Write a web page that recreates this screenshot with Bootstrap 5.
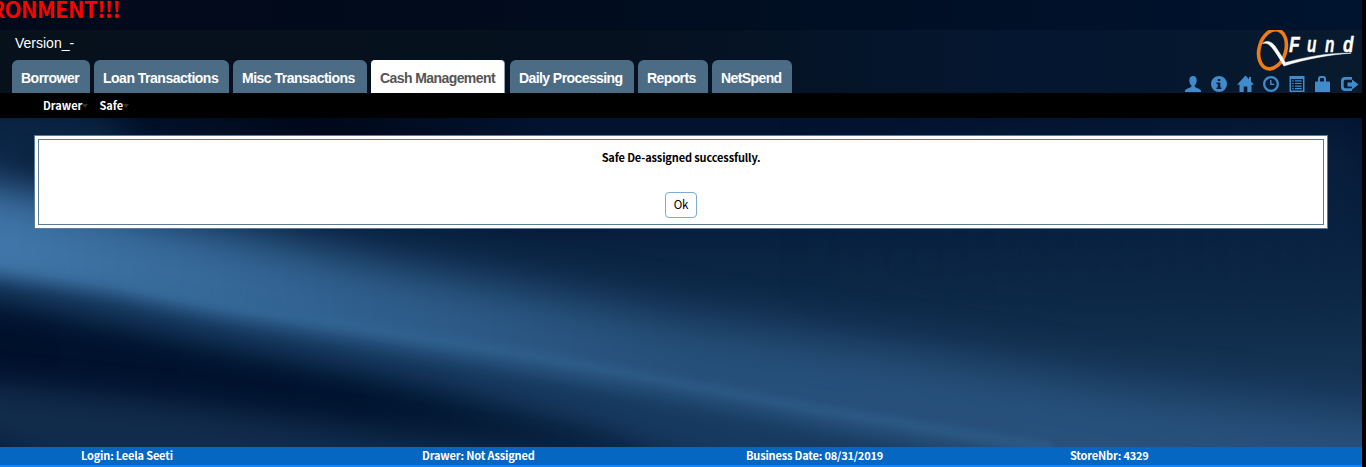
<!DOCTYPE html>
<html lang="en">
<head>
<meta charset="utf-8">
<meta name="viewport" content="width=device-width, initial-scale=1">
<title>QFund</title>
<link rel="stylesheet" href="https://cdn.jsdelivr.net/npm/bootstrap@5.3.0/dist/css/bootstrap.min.css">
<style>
body{background:#000;height:467px;font-family:"Noto Sans CJK SC","Noto Sans",sans-serif;font-size:11px;color:#000}
.page{width:1362px;height:467px}
.env{height:30px;background:linear-gradient(90deg,#02091a,#010b1c 35%,#00142f);color:#f00;font-size:22px;line-height:17px;font-weight:700;letter-spacing:-.55px}
.env span{margin-left:-132px;width:252px;text-align:right;white-space:nowrap}
.head{height:63px;background:linear-gradient(90deg,#06111c,#06111f 45%,#041630 75%,#081a2d)}
.version{font:14px/17px "Liberation Sans",Arial,sans-serif;padding:5px 0 0 15px;height:30px}
.tabs{gap:4px;padding-left:12px}
.tabs .nav-link{height:33px;padding:0 0 0 9px;border-radius:6px 6px 0 0;background:#4c6b84;color:#fff;font:bold 14px/36px "Liberation Sans",Arial,sans-serif;letter-spacing:-.5px;white-space:nowrap}
.tabs .t1{letter-spacing:-.5px}
.tabs .t4,.tabs .t5{letter-spacing:-.58px}
.tabs .t6,.tabs .t7{letter-spacing:-.6px}
.tabs .nav-link.active{background:#fff;color:#555;border-radius:4px 4px 0 0;box-shadow:1px 0 #8aa1b5}
.t1{width:78px}.t2{width:135px}.t3{width:134px}.t4{width:133px;margin-right:2px}.t5{width:124px}.t6{width:70px}.t7{width:80px}
.brand{width:180px}
.tools{gap:10px;padding-right:5px;height:17px}
.tools svg{width:16px;height:16px;fill:#428bca;display:block}
.sub{height:25px;background:#000;color:#fff;padding-left:43px;gap:11px;font-weight:700;line-height:25px}
.sub a{color:#fff;text-decoration:none}
.sub a::after{content:"";display:inline-block;border:3px solid transparent;border-top:4px solid #333;border-bottom:0;vertical-align:2px}
.stage{height:329px}
.scene{position:absolute;inset:0;z-index:0}
.panel{z-index:1;margin:17px 0 0 34px;width:1294px;height:94px;border:1px solid #5b7b98;background:#fff;padding:3px}
.inner{height:100%;border:1px solid #5b7b98;text-align:center}
.msg{font-weight:700;line-height:16px;padding-top:9px;letter-spacing:-.14px}
.okbtn{margin-top:27px;width:32px;height:26px;padding:0 0 2px;border:1px solid #7cabd4;border-radius:4px;background:#fff;font-size:11.5px;line-height:22px;color:#000;letter-spacing:-.2px}
.foot{height:20px;background:#0567c1;border-bottom:2px solid #0a84ff;color:#fff;font-weight:700;line-height:16px;padding-left:81px;letter-spacing:-.18px}
.foot span{white-space:nowrap}
.f1{width:341px}.f2{width:324px}.f3{width:324px}
</style>
</head>
<body class="overflow-hidden">
<div class="page d-flex flex-column overflow-hidden">
  <div class="env d-flex overflow-hidden"><span>ENVIRONMENT!!!</span></div>
  <header class="head d-flex justify-content-between">
    <div>
      <div class="version text-white">Version_-</div>
      <nav class="nav tabs flex-nowrap">
        <a class="nav-link t1" href="#">Borrower</a>
        <a class="nav-link t2" href="#">Loan Transactions</a>
        <a class="nav-link t3" href="#">Misc Transactions</a>
        <a class="nav-link t4 active" href="#">Cash Management</a>
        <a class="nav-link t5" href="#">Daily Processing</a>
        <a class="nav-link t6" href="#">Reports</a>
        <a class="nav-link t7" href="#">NetSpend</a>
      </nav>
    </div>
    <div class="brand d-flex flex-column align-items-end">
      <svg width="106" height="45" viewBox="1256 30 106 45">
        <ellipse cx="1272.500" cy="49.300" rx="13.300" ry="20" transform="rotate(16 1272.5 49.3)" fill="none" stroke="#ef7c14" stroke-width="3.6"/>
        <path d="M1262.500 43.500C1266 40 1271 41 1275 46C1279 51.500 1282 57 1285.500 62.500C1306 57 1330 52.500 1351 53.200C1330 54.500 1306 59 1283.800 66C1280 59 1277 54.500 1273 49C1269 43.500 1266.500 42.500 1262.500 43.500Z" fill="#fff" stroke="#fff" stroke-width=".5"/>
        <g fill="#fff" stroke="#fff" stroke-width=".4" font-family="Liberation Sans Narrow, Liberation Sans, sans-serif" font-weight="700" font-style="italic" font-size="22"><text transform="translate(1289 52) scale(.8 1)">F</text><text transform="translate(1307 52) scale(.7 1)">u</text><text transform="translate(1325 52) scale(.7 1)">n</text><text transform="translate(1343 52) scale(.78 1)">d</text></g>
      </svg>
      <div class="tools d-flex mt-auto">
        <svg viewBox="0 0 16 16"><path d="M8 0C5.700 0 4.300 1.600 4.300 4.200C4.300 6.500 5.100 8.300 6.300 9.300V11C4.500 12 .7 12.800 0 14.500V16H16V14.500C15.300 12.800 11.500 12 9.700 11V9.300C10.900 8.300 11.700 6.500 11.700 4.200C11.700 1.600 10.300 0 8 0Z"/></svg>
        <svg viewBox="0 0 16 16"><path fill-rule="evenodd" d="M8 0a8 8 0 1 0 0 16A8 8 0 0 0 8 0ZM6.700 3H9.300V5H6.700ZM5.500 6.500H9.300V11.500H10.500V13H5.500V11.500H6.700V8H5.500Z"/></svg>
        <svg viewBox="0 0 16 16" style="overflow:visible"><path d="M8.500-.5L17 8.800H14.500V16H10.300V10.500H6.700V16H2.500V8.800H0L8.500-.5ZM12 1H14V6L12 4Z"/></svg>
        <svg viewBox="0 0 16 16"><path fill-rule="evenodd" d="M8 0a8 8 0 1 0 0 16A8 8 0 0 0 8 0ZM8 2.300A5.700 5.700 0 1 1 8 13.700A5.700 5.700 0 0 1 8 2.300ZM7.100 4H8.500V7.700H11.300V9.100H7.100Z"/></svg>
        <svg viewBox="0 0 16 16"><path fill-rule="evenodd" d="M.5 0H15.500V16H.5ZM2 3V14.500H14V3ZM3.200 4.300H4.700V5.500H3.200ZM5.900 4.300H12.700V5.500H5.900ZM3.200 6.900H4.700V8.100H3.200ZM5.900 6.900H12.700V8.100H5.900ZM3.200 9.500H4.700V10.700H3.200ZM5.900 9.500H12.700V10.700H5.900ZM3.200 12.100H4.700V13.300H3.200ZM5.900 12.100H12.700V13.300H5.900Z"/></svg>
        <svg viewBox="0 0 16 16"><path fill-rule="evenodd" d="M0 6.500Q0 5.500 1 5.500H3V3Q3 0 5.500 0H8.500Q11 0 11 3V5.500H14Q15 5.500 15 6.500V16H0ZM5 5.500H9V3Q9 2 8 2H6Q5 2 5 3Z"/></svg>
        <svg viewBox="0 0 16 16" style="overflow:visible"><path d="M11 1H4Q0 1 0 5V11Q0 15 4 15H11V12.300H4.500Q2.700 12.300 2.700 10.500V5.500Q2.700 3.700 4.500 3.700H11ZM11 3.500V6.500H6.500V10.500H11V13.500L17.500 8.500Z"/></svg>
      </div>
    </div>
  </header>
  <nav class="sub d-flex"><a href="#">Drawer</a><a href="#">Safe</a></nav>
  <main class="stage position-relative overflow-hidden">
    <svg class="scene" width="1362" height="329" viewBox="0 118 1362 329" color-interpolation-filters="sRGB">
      <defs>
        <linearGradient id="base" x2="0" y2="1"><stop stop-color="#01122d"/><stop offset=".35" stop-color="#08203f"/><stop offset=".7" stop-color="#12304f"/><stop offset="1" stop-color="#1a3d62"/></linearGradient>
        <linearGradient id="glow" gradientUnits="userSpaceOnUse" x1="0" y1="0" x2="1362" y2="0"><stop stop-color="#4076a9"/><stop offset=".25" stop-color="#30608e"/><stop offset=".5" stop-color="#264f79"/><stop offset="1" stop-color="#28507c"/></linearGradient>
        <radialGradient id="corner" gradientUnits="userSpaceOnUse" cx="0" cy="0" r="1" gradientTransform="translate(330 130) rotate(15) scale(360 70)"><stop stop-color="#000819"/><stop offset="1" stop-color="#000819" stop-opacity="0"/></radialGradient>
        <linearGradient id="right" gradientUnits="userSpaceOnUse" x1="800" y1="0" x2="1362" y2="0"><stop stop-color="#0c2444" stop-opacity="0"/><stop offset="1" stop-color="#0c2444" stop-opacity=".6"/></linearGradient>
        <linearGradient id="under" gradientUnits="userSpaceOnUse" x1="0" y1="0" x2="900" y2="0"><stop stop-color="#00112c"/><stop offset=".4" stop-color="#00142f"/><stop offset="1" stop-color="#153454"/></linearGradient>
        <filter id="b25" x="-20%" y="-40%" width="140%" height="180%"><feGaussianBlur stdDeviation="23"/></filter>
        <filter id="b15" x="-20%" y="-40%" width="140%" height="180%"><feGaussianBlur stdDeviation="14"/></filter>
        <filter id="b10" x="-20%" y="-40%" width="140%" height="180%"><feGaussianBlur stdDeviation="9"/></filter>
        <filter id="b3" x="-20%" y="-40%" width="140%" height="180%"><feGaussianBlur stdDeviation="4"/></filter>
      </defs>
      <rect y="118" width="1362" height="329" fill="url(#base)"/>
      <rect x="800" y="118" width="562" height="180" fill="url(#right)" filter="url(#b25)"/>
      <ellipse cx="0" cy="134" rx="130" ry="28" fill="#0b2545" filter="url(#b15)"/>
      <rect y="118" width="800" height="200" fill="url(#corner)"/>
      <path d="M-150 150L0 184L218 227L392 265L683 318L900 350L1118 388L1450 430V600H-150Z" fill="url(#glow)" filter="url(#b25)"/>
      <path d="M-100 258L0 277L110 294L218 317L348 340L501 367L683 402L814 428L1053 470L1200 505V650H-100Z" fill="#173a60" filter="url(#b10)"/>
      <path d="M-100 285L0 301L218 345L435 387L600 428L750 478V650H-100Z" fill="url(#under)" filter="url(#b15)"/>
      <path d="M110 280L218 303L348 325L501 350L683 384L814 409L1053 448" fill="none" stroke="#376d9c" stroke-opacity=".4" stroke-width="9" filter="url(#b3)"/>
      <path d="M-100 370L0 383L180 403L400 433L600 460V540H200L0 450L-100 425Z" fill="#112b4b" filter="url(#b15)"/>
    </svg>
    <section class="panel position-relative">
      <div class="inner"><div class="msg">Safe De-assigned successfully.</div><button class="btn okbtn">Ok</button></div>
    </section>
  </main>
  <footer class="foot d-flex"><span class="f1">Login: Leela Seeti</span><span class="f2">Drawer: Not Assigned</span><span class="f3">Business Date: 08/31/2019</span><span>StoreNbr: 4329</span></footer>
</div>
<script src="https://cdn.jsdelivr.net/npm/bootstrap@5.3.0/dist/js/bootstrap.bundle.min.js"></script>
</body>
</html>
